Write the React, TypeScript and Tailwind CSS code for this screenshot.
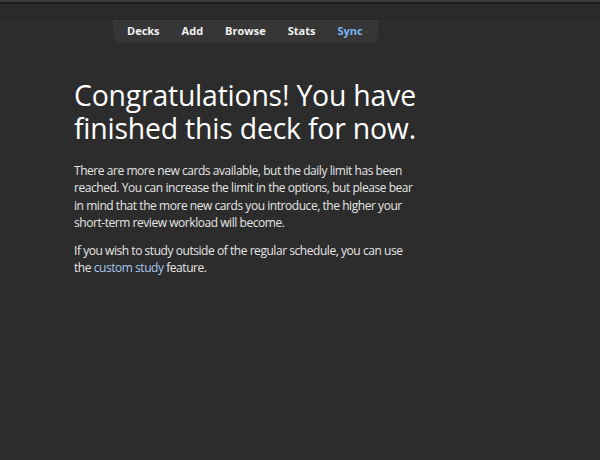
export default function App() {
  const items = ["Decks", "Add", "Browse", "Stats", "Sync"];
  return (
    <div
      className="h-[460px] w-[600px] overflow-hidden bg-[#2c2c2c] text-[#f0f0f0]"
      style={{ fontFamily: '"Open Sans", "Noto Sans", sans-serif' }}
    >
      {/* window chrome strip above the toolbar */}
      <div className="h-[2px] bg-[#3a3a3a]" />
      <div className="h-[2px] bg-[#1c1c1c]" />
      <div className="h-[16px] border-b border-[#252525] bg-[#2a2a2a]" />

      {/* top toolbar */}
      <div className="flex">
        <nav className="ml-[113px] flex h-[23px] w-[265px] items-center gap-[22px] rounded-b-[8px] bg-[#363636] pl-[14px] text-[11px] font-bold text-[#f2f2f2]">
          {items.map((t) => (
            <span key={t} className={t === "Sync" ? "text-[#7ab6f2]" : ""}>
              {t}
            </span>
          ))}
        </nav>
      </div>

      {/* congrats message */}
      <main className="ml-[74px] mt-[36px] w-[345px]">
        <h1 className="text-[28.4px] leading-[33px] tracking-[-0.2px] text-white">
          Congratulations! You have finished this deck for now.
        </h1>
        <p className="mt-[17px] text-[12px] leading-[17.3px] tracking-[-0.45px] text-[#e6e6e6]">
          There are more new cards available, but the daily limit has been
          reached. You can increase the limit in the options, but please bear
          in mind that the more new cards you introduce, the higher your
          short-term review workload will become.
        </p>
        <p className="mt-[11px] text-[12px] leading-[17.3px] tracking-[-0.45px] text-[#e6e6e6]">
          If you wish to study outside of the regular schedule, you can use the{" "}
          <span className="text-[#a7c6ee]">custom study</span> feature.
        </p>
      </main>
    </div>
  );
}
